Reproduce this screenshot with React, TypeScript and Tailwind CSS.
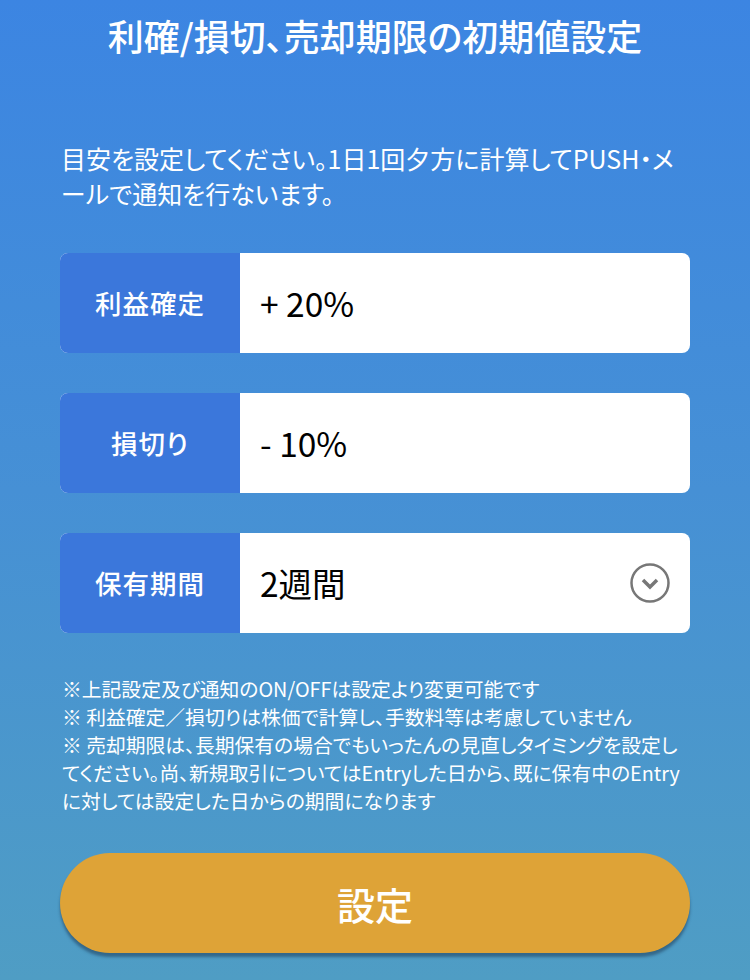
const jp = "font-['Noto_Sans_CJK_JP','Noto_Sans',sans-serif] [font-feature-settings:'palt']";

const rows = [
  { label: '利益確定', value: '+ 20%', select: false },
  { label: '損切り', value: '- 10%', select: false },
  { label: '保有期間', value: '2週間', select: true },
];

function ChevronCircle() {
  return (
    <svg width="42" height="42" viewBox="0 0 42 42" fill="none">
      <circle cx="21" cy="21" r="18.5" stroke="#777" strokeWidth="2.5" />
      <path d="M14 18l7 7 7-7" stroke="#777" strokeWidth="3.5" strokeLinecap="butt" strokeLinejoin="miter" />
    </svg>
  );
}

export default function App() {
  return (
    <div className={`${jp} w-[750px] h-[980px] overflow-hidden bg-gradient-to-b from-[#3c85e2] via-[#4690d5] to-[#4f9dc4] text-white`}>
      <h1 className="pt-[11px] text-center text-[36px] font-medium leading-[48px]">
        利確/損切、売却期限の初期値設定
      </h1>

      <p className="mt-[82px] pl-[61px] text-[25px] leading-[35px] whitespace-nowrap">
        目安を設定してください。1日1回夕方に計算してPUSH・メ
        <br />
        ールで通知を行ないます。
      </p>

      <div className="mt-[42px] flex flex-col gap-10 px-[60px]">
        {rows.map((row) => (
          <div key={row.label} className="flex h-[100px] overflow-hidden rounded-lg bg-white">
            <div className="flex w-[180px] shrink-0 items-center justify-center bg-[#3b77db] text-[26.5px] font-medium tracking-[1px] text-white">
              {row.label}
            </div>
            <div className="flex flex-1 items-center justify-between pl-[20px] pr-[19px] text-[33.5px] text-black">
              <span>{row.value}</span>
              {row.select && <ChevronCircle />}
            </div>
          </div>
        ))}
      </div>

      <div className="mt-[42px] pl-[62px] text-[19.8px] leading-[28px] whitespace-nowrap">
        <p>※上記設定及び通知のON/OFFは設定より変更可能です</p>
        <p>※ 利益確定／損切りは株価で計算し、手数料等は考慮していません</p>
        <p>
          ※ 売却期限は、長期保有の場合でもいったんの見直しタイミングを設定し
          <br />
          てください。尚、新規取引についてはEntryした日から、既に保有中のEntry
          <br />
          に対しては設定した日からの期間になります
        </p>
      </div>

      <div className="mt-[38px] px-[60px]">
        <button className="flex h-[100px] w-full items-center justify-center rounded-full bg-[#dea337] text-[38px] font-medium text-white shadow-[0_4px_3px_rgba(30,60,90,0.55)]">
          設定
        </button>
      </div>
    </div>
  );
}
